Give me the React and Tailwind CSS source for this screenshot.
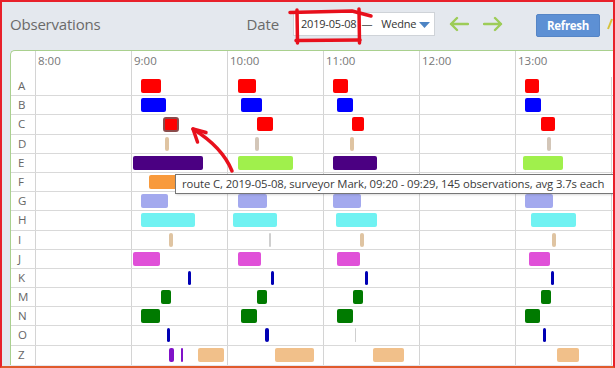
import React from "react";

const HOURS = ["8:00", "9:00", "10:00", "11:00", "12:00", "13:00"];
const PX_PER_MIN = 1.6; // 96px per hour

const C = {
  red: "#ff0000",
  blue: "#0000ff",
  tan: "#dfc4a2",
  grey: "#cfcfcf",
  indigo: "#4b0082",
  lime: "#a0f04c",
  orange: "#f89a3c",
  lavender: "#a3a9ee",
  cyan: "#70f2f2",
  magenta: "#e050d8",
  navy: "#0000b4",
  green: "#007a00",
  purple: "#8012c8",
  peach: "#f1c08a",
};

// [start minute from 8:00, duration in minutes, colour, selected?]
const ROUTES = [
  { name: "A", runs: [[66, 12.5, C.red], [127, 11, C.red], [186, 9.5, C.red], [306, 9, C.red]] },
  { name: "B", runs: [[66, 16, C.blue], [129, 13, C.blue], [189, 9.5, C.blue], [306, 10, C.blue]] },
  { name: "C", runs: [[80, 10, C.red, true], [139, 10, C.red], [198, 7.5, C.red], [316, 9, C.red]] },
  { name: "D", runs: [[81, 2.5, C.tan], [137.5, 2.5, "#d3c6b8"], [197, 2.5, C.tan], [320, 2.5, "#d3c6b8"]] },
  { name: "E", runs: [[61, 44, C.indigo], [127, 34.5, C.lime], [186, 28, C.indigo], [305, 25, C.lime]] },
  { name: "F", runs: [[71, 30, C.orange], [130, 25, C.orange], [190, 20, C.orange], [308, 18, C.orange]] },
  { name: "G", runs: [[66, 17, C.lavender], [127, 18, C.lavender], [186, 17.5, C.lavender], [306, 17.5, C.lavender]] },
  { name: "H", runs: [[66, 34, C.cyan], [124, 27, C.cyan], [188, 25.5, C.cyan], [310, 28, C.cyan]] },
  { name: "I", runs: [[84, 2.5, C.tan], [146, 1.3, C.grey], [203, 2.5, C.tan], [323, 2.5, C.tan]] },
  { name: "J", runs: [[61, 17, C.magenta], [127, 14.5, C.magenta], [189, 14, C.magenta], [309, 13, C.magenta]] },
  { name: "K", runs: [[95.5, 2, C.navy], [147.5, 2, C.navy], [206, 2, C.navy], [322.5, 2, C.navy]] },
  { name: "M", runs: [[79, 6, C.green], [139, 6, C.green], [199, 6, C.green], [316, 6.3, C.green]] },
  { name: "N", runs: [[66, 12, C.green], [129, 9.5, C.green], [189, 9.5, C.green], [306, 9.5, C.green]] },
  { name: "O", runs: [[82.5, 2, C.navy], [144, 2, C.navy], [200, 0.7, C.grey], [317.5, 2, C.navy]] },
  {
    name: "Z",
    runs: [
      [84, 3, C.purple],
      [91, 1.6, C.purple],
      [102, 16, C.peach],
      [150, 24.5, C.peach],
      [211, 19.5, C.peach],
      [326, 14, C.peach],
    ],
  },
];

const Row = ({ route }) => (
  <div className="flex h-[19.2px] border-b border-[#d9d9d9] last:border-b-0">
    <div className="w-[25px] shrink-0 border-r border-[#d4d4d4] pl-[7px] text-[11.5px] leading-[18px] text-[#666]">
      {route.name}
    </div>
    <div className="relative flex flex-1">
      {HOURS.map((h) => (
        <div key={h} className="w-[96px] shrink-0 border-r border-[#d4d4d4] last:border-r-0" />
      ))}
      {route.runs.map(([start, dur, color, selected], i) => (
        <div
          key={i}
          className={
            selected
              ? "absolute top-[1.5px] h-[15px] rounded-[3px] border-2 border-[#8a4b4b]"
              : "absolute top-[2px] h-[14px] rounded-[2px]"
          }
          style={{
            left: start * PX_PER_MIN - 1,
            width: Math.max(dur * PX_PER_MIN, 1),
            backgroundColor: color,
          }}
        />
      ))}
    </div>
  </div>
);

export default function App() {
  return (
    <div className="relative h-[368px] w-[615px] overflow-hidden border-2 border-[#e8202a] border-b-[#e05a2c] bg-[#e4e8ee] font-['Open_Sans',sans-serif]">
      <div className="flex h-[48px] items-center pb-[4px] pl-[8px]">
        <h1 className="text-[15px] tracking-[-0.2px] text-[#6a6a6a]">Observations</h1>
        <div className="flex-1" />
        <span className="mr-[14px] text-[15px] tracking-[-0.1px] text-[#6a6a6a]">Date</span>
        <div className="flex h-[24px] w-[142px] shrink-0 items-center whitespace-nowrap border border-[#cfd3d8] bg-white pl-[7px] text-[11px] tracking-[-0.2px] text-[#333]">
          <span>2019-05-08</span>
          <span className="ml-[5px] text-[#666]">—</span>
          <span className="ml-[9px]">Wedne</span>
          <svg width="11" height="6" viewBox="0 0 11 6" className="ml-[3px] mt-[2px]">
            <path d="M0 0 H11 L5.5 6 Z" fill="#4d84c4" />
          </svg>
        </div>
        <div className="ml-[14px] flex items-center gap-[14px]">
          <svg width="20" height="16" viewBox="0 0 20 16" fill="none" stroke="#9dcc57" strokeWidth="2.4" strokeLinecap="round" strokeLinejoin="round">
            <path d="M19 8 H2 M8 2 L2 8 L8 14" />
          </svg>
          <svg width="20" height="16" viewBox="0 0 20 16" fill="none" stroke="#9dcc57" strokeWidth="2.4" strokeLinecap="round" strokeLinejoin="round">
            <path d="M1 8 H18 M12 2 L18 8 L12 14" />
          </svg>
        </div>
        <button className="ml-[33px] mt-[3px] h-[23px] w-[64px] shrink-0 rounded-[2px] border border-[#5585c6] bg-[#5d90d4] text-[11.5px] font-bold tracking-[-0.3px] text-white">
          Refresh
        </button>
        <svg width="6" height="12" viewBox="0 0 6 12" className="ml-[7px] shrink-0 self-center">
          <path d="M1 11 L5 1" stroke="#d6c23a" strokeWidth="2" />
        </svg>
      </div>

      <div className="ml-[8px] overflow-hidden rounded-tl-[5px] border border-b-0 border-r-0 border-[#a9d08e] bg-white">
        <div className="flex h-[26px]">
          <div className="w-[25px] shrink-0 border-r border-[#d4d4d4]" />
          {HOURS.map((h) => (
            <div
              key={h}
              className="w-[96px] shrink-0 border-r border-[#d4d4d4] pl-[2px] pt-[3px] text-[11.5px] leading-[14px] text-[#777] last:border-r-0"
            >
              {h}
            </div>
          ))}
        </div>
        {ROUTES.map((r) => (
          <Row key={r.name} route={r} />
        ))}
      </div>

      {/* tooltip over the chart */}
      <div className="absolute left-[173px] top-[172px] h-[20px] w-[439px] whitespace-nowrap border border-[#767676] bg-white pl-[6px] text-[11.3px] leading-[18px] tracking-[-0.1px] text-[#3a3a3a] shadow-[1px_1px_2px_rgba(0,0,0,0.15)]">
        route C, 2019-05-08, surveyor Mark, 09:20 - 09:29, 145 observations, avg 3.7s each
      </div>

      {/* red hand-drawn annotations */}
      <svg
        className="pointer-events-none absolute left-[-2px] top-[-2px]"
        width="615"
        height="368"
        viewBox="0 0 615 368"
        fill="none"
        stroke="#e8101c"
        strokeWidth="3.5"
        strokeLinecap="round"
        strokeLinejoin="round"
      >
        <path d="M297 10 L297.5 43" />
        <path d="M290 12.5 L352 11 L371 16" />
        <path d="M359 9 L359.5 43" />
        <path d="M296 40.5 L360 40" />
        <path d="M232 171 C226 156 214 142 193 129" />
        <path d="M193 129 L206 132.5 M193 129 L197.5 142" />
      </svg>
    </div>
  );
}
